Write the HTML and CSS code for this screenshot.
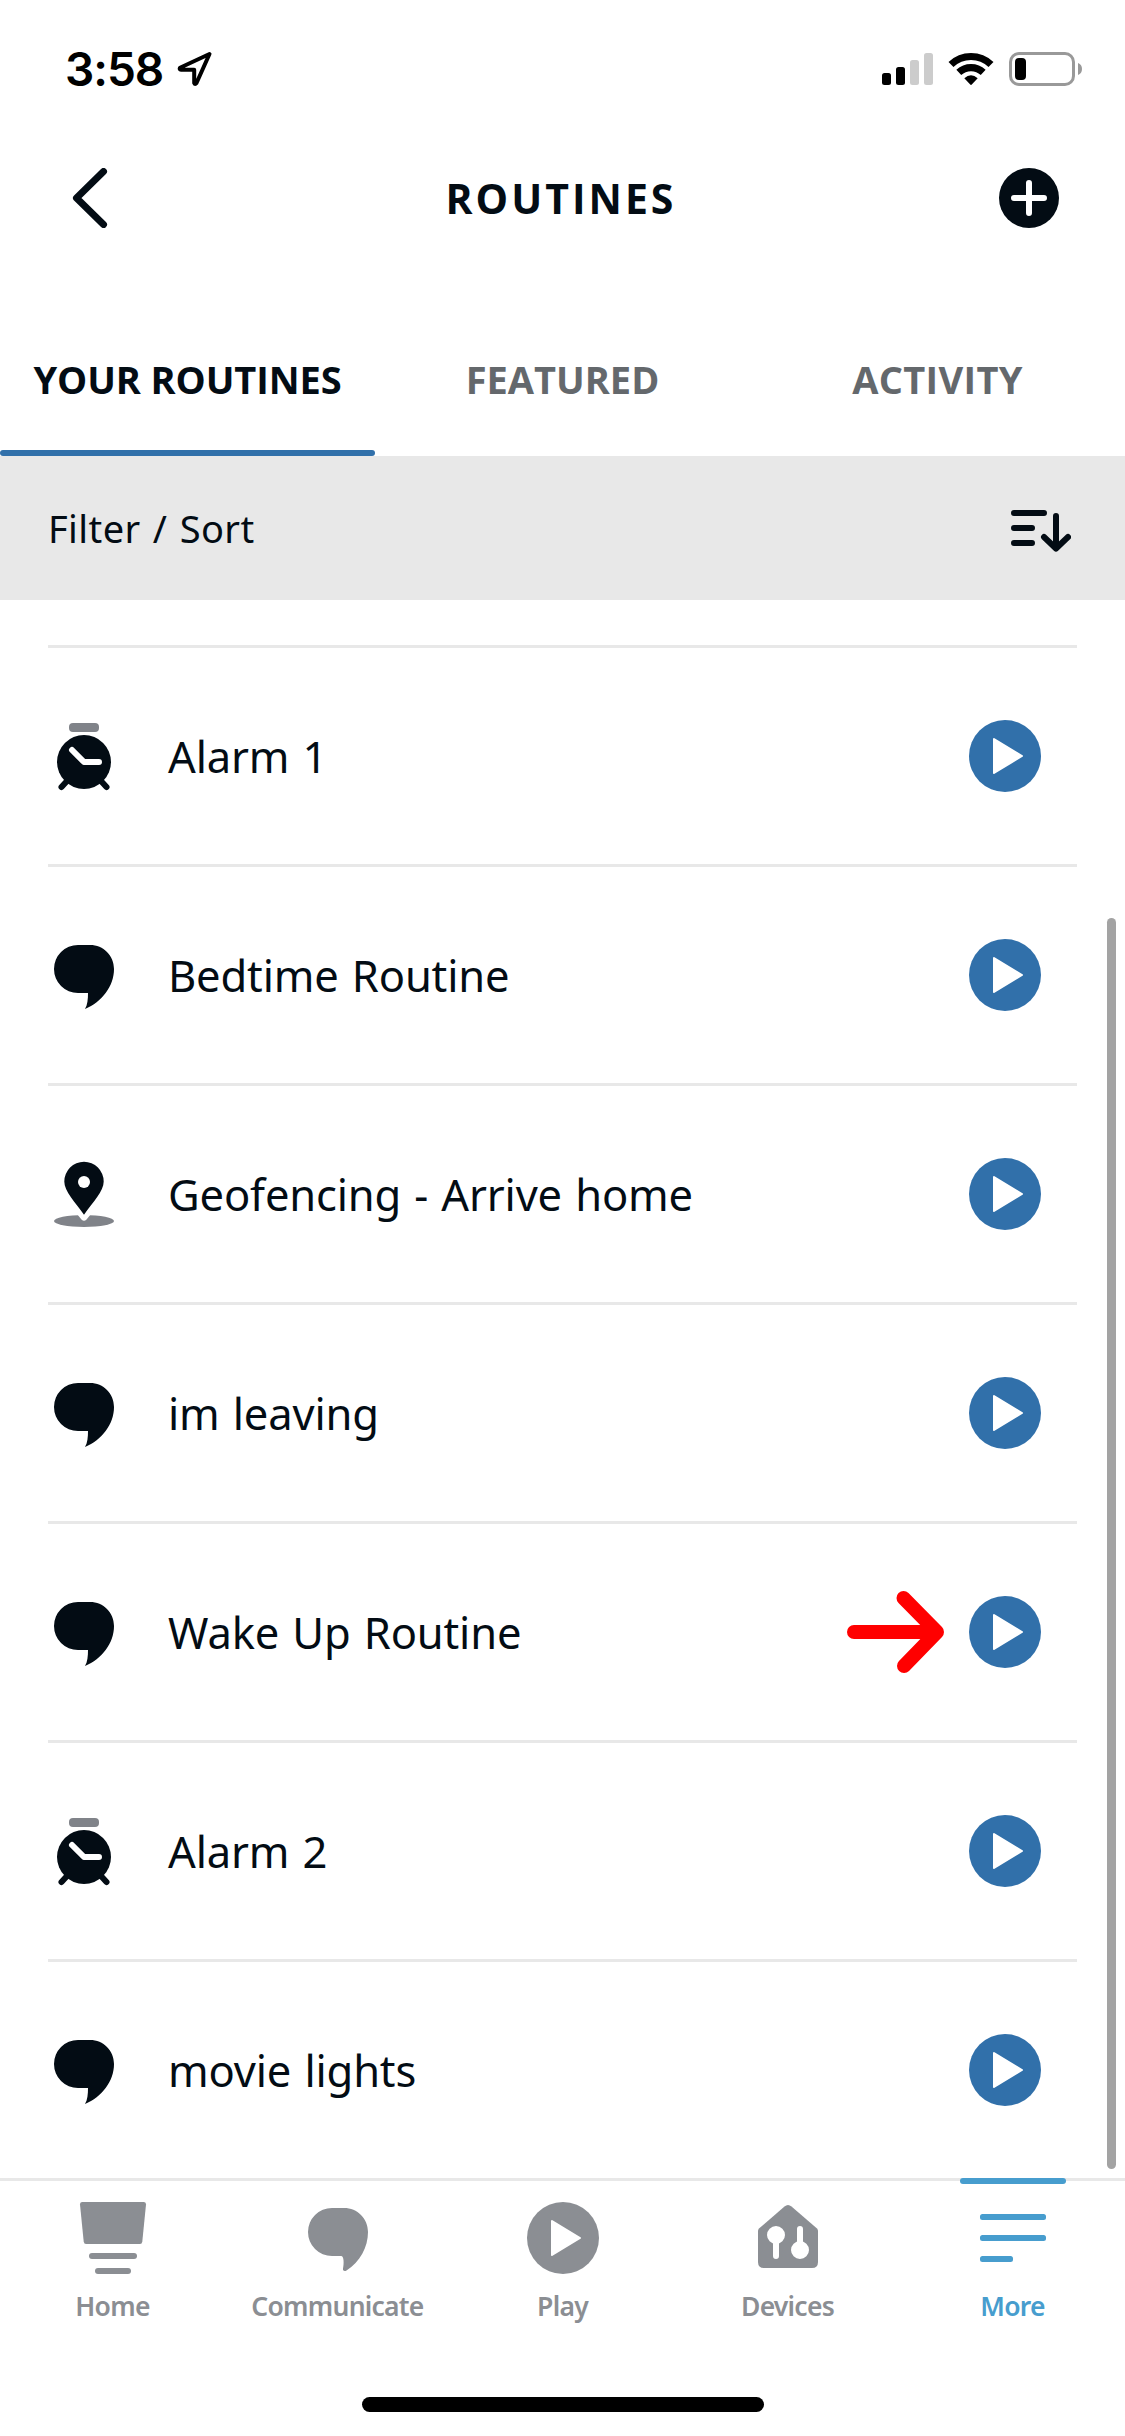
FILE: index.html
```html
<!DOCTYPE html>
<html lang="en">
<head>
<meta charset="utf-8">
<title>Routines</title>
<link rel="stylesheet" href="styles.css">
</head>
<body>
<svg class="defs" width="0" height="0" aria-hidden="true">
  <symbol id="play" viewBox="0 0 72 72">
    <circle cx="36" cy="36" r="36" fill="currentColor"/>
    <path d="M25 19L53 36L25 53Z" fill="#fff" stroke="#fff" stroke-width="2" stroke-linejoin="round"/>
  </symbol>
  <symbol id="alarm" viewBox="0 0 72 72">
    <rect x="21" y="3" width="30" height="9" rx="4" fill="#808389"/>
    <path d="M19 61L13.500 67M53 61L58.500 67" stroke="#030c14" stroke-width="6" stroke-linecap="round"/>
    <circle cx="36" cy="42" r="27" fill="#030c14"/>
    <path d="M24 30L36 42H51" fill="none" stroke="#fff" stroke-width="6" stroke-linecap="round" stroke-linejoin="round"/>
  </symbol>
  <symbol id="speech" viewBox="0 0 72 72">
    <path d="M30 6H42C55.500 6 66 16.500 66 30C66 47 54 63 37 70C39.500 66 40 60 40 54H30A24 24 0 0 1 30 6Z" fill="currentColor"/>
  </symbol>
  <symbol id="place" viewBox="0 0 72 72">
    <ellipse cx="36" cy="63" rx="30" ry="6" fill="#808389"/>
    <path d="M29 56L33.500 61.500Q36 64 38.500 61.500L43 56Z" fill="#fff"/>
    <path d="M36 56.800C27 44 16.300 33.500 16.300 23.500A19.700 19.700 0 0 1 55.700 23.500C55.700 33.500 45 44 36 56.800Z" fill="#030c14"/>
    <circle cx="36" cy="24" r="6" fill="#fff"/>
  </symbol>
</svg>

<div class="screen">
  <div class="status">
    <div class="clock">
      <span class="time">3:58</span>
      <svg class="locate" width="36" height="36" viewBox="0 0 36 36"><path d="M32.500 3L3 16.700Q2 18.700 4 18.700H17.200V32Q18 34 19.500 32Z" fill="none" stroke="#000" stroke-width="4" stroke-linejoin="round"/></svg>
    </div>
    <div class="indicators">
      <svg width="51" height="34" viewBox="0 0 51 34"><rect x="0" y="21" width="9" height="12" rx="2.500"/><rect x="14" y="15" width="9" height="18" rx="2.500"/><rect x="28" y="8" width="9" height="25" rx="2.500" fill="#ccc"/><rect x="42" y="1" width="9" height="32" rx="2.500" fill="#ccc"/></svg>
      <svg class="wifi" width="46" height="34" viewBox="0 0 46 34"><g fill="none" stroke="#000" stroke-width="7.200"><path d="M3 12.500A29 29 0 0 1 43 12.500"/><path d="M10.800 20.300A18 18 0 0 1 35.200 20.300"/></g><path d="M16.300 26.200Q23 20.500 29.700 26.200L24 32.300Q23 33.500 22 32.300Z"/></svg>
      <svg width="74" height="34" viewBox="0 0 74 34"><rect x="1.500" y="1.500" width="63" height="31" rx="8.500" fill="none" stroke="#999" stroke-width="3"/><rect x="6" y="6" width="11" height="22" rx="4"/><path d="M69 11Q73 12.500 73 17Q73 21.500 69 23Z" fill="#999"/></svg>
    </div>
  </div>

  <header class="header">
    <svg width="36" height="60" viewBox="0 0 36 60"><path d="M31.500 3.500L4.500 30L31.500 56.500" fill="none" stroke="#030c14" stroke-width="7" stroke-linecap="round" stroke-linejoin="round"/></svg>
    <h1 class="title">ROUTINES</h1>
    <svg width="60" height="60" viewBox="0 0 60 60"><circle cx="30" cy="30" r="30" fill="#030c14"/><path d="M15 30H45M30 15V45" stroke="#fff" stroke-width="6" stroke-linecap="round"/></svg>
  </header>

  <nav class="tabs">
    <div class="tab tab-active"><span>YOUR ROUTINES</span></div>
    <div class="tab tab-featured"><span>FEATURED</span></div>
    <div class="tab tab-activity"><span>ACTIVITY</span></div>
  </nav>

  <div class="filter">
    <span class="filter-label">Filter / Sort</span>
    <svg width="60" height="42" viewBox="0 0 60 42"><path d="M3 3H33M3 18H21M3 33H21M45 6V38M33 27L45 38.500L57 27" fill="none" stroke="#030c14" stroke-width="6" stroke-linecap="round" stroke-linejoin="round"/></svg>
  </div>

  <main class="list">
    <div class="row"><svg class="icon"><use href="#alarm"/></svg><span class="name">Alarm 1</span><svg class="run"><use href="#play"/></svg></div>
    <div class="row"><svg class="icon"><use href="#speech"/></svg><span class="name">Bedtime Routine</span><svg class="run"><use href="#play"/></svg></div>
    <div class="row"><svg class="icon"><use href="#place"/></svg><span class="name">Geofencing - Arrive home</span><svg class="run"><use href="#play"/></svg></div>
    <div class="row"><svg class="icon"><use href="#speech"/></svg><span class="name">im leaving</span><svg class="run"><use href="#play"/></svg></div>
    <div class="row"><svg class="icon"><use href="#speech"/></svg><span class="name">Wake Up Routine</span><svg class="pointer" width="98" height="84" viewBox="0 0 98 84"><path d="M7 42H89M56.500 8L90 42L57 76" fill="none" stroke="#f00" stroke-width="14" stroke-linecap="round" stroke-linejoin="round"/></svg><svg class="run"><use href="#play"/></svg></div>
    <div class="row"><svg class="icon"><use href="#alarm"/></svg><span class="name">Alarm 2</span><svg class="run"><use href="#play"/></svg></div>
    <div class="row"><svg class="icon"><use href="#speech"/></svg><span class="name">movie lights</span><svg class="run"><use href="#play"/></svg></div>
    <div class="scrollbar"></div>
  </main>

  <nav class="bottom">
    <div class="item"><svg class="glyph" viewBox="0 0 72 72" fill="currentColor"><path d="M5 0H67Q69.200 0 69 2.500L65.300 39.500Q65 42 63 42H9Q7 42 6.700 39.500L3 2.500Q2.800 0 5 0Z"/><rect x="12" y="51" width="48" height="6" rx="3"/><rect x="18" y="66" width="36" height="6" rx="3"/></svg><span>Home</span></div>
    <div class="item"><svg class="glyph" viewBox="0 0 72 72" fill="currentColor"><path d="M30 6H42C55.500 6 66 16.500 66 30C66 45 58 60 44.500 68.500C42 69.800 40.700 68.500 41 66.500C42 62 42.200 54 39 54H30A24 24 0 0 1 30 6Z"/></svg><span>Communicate</span></div>
    <div class="item"><svg class="glyph"><use href="#play"/></svg><span>Play</span></div>
    <div class="item"><svg class="glyph" viewBox="0 0 72 72"><path d="M32.500 4.500Q36 1.500 39.500 4.500L65 26.500Q66 27.500 66 29V60Q66 66 60 66H12Q6 66 6 60V29Q6 27.500 7 26.500Z" fill="currentColor"/><g fill="#fff" stroke="#fff" stroke-width="6" stroke-linecap="round"><path d="M24 34V54M48 27V44"/><circle cx="24" cy="33" r="6"/><circle cx="48" cy="48" r="6"/></g></svg><span>Devices</span></div>
    <div class="item item-active"><svg class="glyph" viewBox="0 0 72 72" fill="currentColor"><rect x="3" y="12" width="66" height="6" rx="2.500"/><rect x="3" y="33" width="66" height="6" rx="2.500"/><rect x="3" y="54" width="33" height="6" rx="2.500"/></svg><span>More</span></div>
  </nav>
  <div class="home-bar"></div>
</div>
</body>
</html>
```
FILE: styles.css
```css
* { box-sizing: border-box; }

body {
  margin: 0;
  background: #fff;
  color: #030c14;
  font-family: "Noto Sans", "Open Sans", sans-serif;
}

svg { display: block; flex: none; }
.defs { position: absolute; }

.screen {
  display: flex;
  flex-direction: column;
  width: 1125px;
  height: 2436px;
  overflow: hidden;
}

.status {
  display: flex;
  justify-content: space-between;
  align-items: center;
  height: 138px;
  padding: 0 42px 0 65px;
  color: #000;
}

.clock, .indicators { display: flex; align-items: center; }
.clock { gap: 12px; }
.time {
  font: 600 46px/56px Inter, sans-serif;
  letter-spacing: -1px;
  width: 100px;
}
.wifi { margin: 0 15px; }

.header {
  display: flex;
  justify-content: space-between;
  align-items: center;
  height: 120px;
  padding: 0 66px 0 72px;
}

.title {
  margin: 0 0 0 15px;
  font: 700 41px/56px "Open Sans", sans-serif;
  letter-spacing: 3px;
}

.tabs {
  display: grid;
  grid-template-columns: repeat(3, 1fr);
  height: 198px;
}

.tab {
  display: flex;
  justify-content: center;
  padding-top: 95px;
  color: #64686c;
  font: 700 38px/52px "Open Sans", sans-serif;
  white-space: nowrap;
  position: relative;
}

.tab-activity { letter-spacing: 0.3px; }

.tab-active { color: #030c14; letter-spacing: -0.1px; }
.tab-active::after {
  content: "";
  position: absolute;
  left: 0;
  right: 0;
  bottom: 0;
  height: 6px;
  border-radius: 3px;
  background: #3170aa;
}

.filter {
  display: flex;
  justify-content: space-between;
  align-items: center;
  height: 144px;
  padding: 0 54px 0 48px;
  background: #e8e8e8;
  font-size: 38px;
  letter-spacing: 0.4px;
  word-spacing: 2px;
}

.filter svg { margin-top: 6px; }

.list {
  position: relative;
  height: 1578px;
  padding: 45px 48px 0;
}

.row {
  display: flex;
  align-items: center;
  height: 219px;
  border-top: 3px solid #e8e8e8;
  padding-right: 36px;
}

.icon { width: 72px; height: 72px; margin-right: 48px; color: #030c14; }
.name { flex: 1; font-size: 43.500px; letter-spacing: -0.15px; word-spacing: 2px; }
.run { width: 72px; height: 72px; color: #3170aa; }
.pointer { margin-right: 24px; }

.scrollbar {
  position: absolute;
  top: 318px;
  right: 9px;
  width: 9px;
  height: 1251px;
  border-radius: 5px;
  background: #a3a3a3;
}

.bottom {
  display: grid;
  grid-template-columns: repeat(5, 1fr);
  height: 219px;
  border-top: 3px solid #e8e8e8;
}

.item {
  position: relative;
  display: flex;
  flex-direction: column;
  align-items: center;
  padding-top: 21px;
  gap: 14px;
  color: #8b8e93;
  font-size: 26.500px;
  font-weight: 600;
  letter-spacing: -0.75px;
  line-height: 36px;
}

.glyph { width: 72px; height: 72px; margin-left: 1px; }

.item-active { color: #479dce; }
.item-active::before {
  content: "";
  position: absolute;
  top: -3px;
  left: 60px;
  width: 106px;
  height: 6px;
  border-radius: 3px;
  background: #479dce;
}

.home-bar {
  align-self: center;
  width: 402px;
  height: 15px;
  border-radius: 8px;
  background: #000;
}
```
